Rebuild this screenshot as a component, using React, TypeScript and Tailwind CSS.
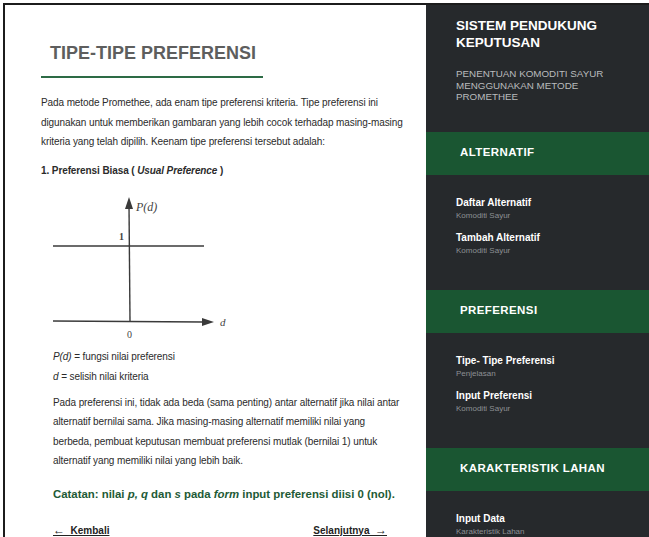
import React from "react";

const font = { fontFamily: '"Liberation Sans", Arial, sans-serif' };

const menu: { title: string; items: { label: string; sub: string }[] }[] = [
  {
    title: "ALTERNATIF",
    items: [
      { label: "Daftar Alternatif", sub: "Komoditi Sayur" },
      { label: "Tambah Alternatif", sub: "Komoditi Sayur" },
    ],
  },
  {
    title: "PREFERENSI",
    items: [
      { label: "Tipe- Tipe Preferensi", sub: "Penjelasan" },
      { label: "Input Preferensi", sub: "Komoditi Sayur" },
    ],
  },
  {
    title: "KARAKTERISTIK LAHAN",
    items: [{ label: "Input Data", sub: "Karakteristik Lahan" }],
  },
];

// Grafik fungsi preferensi biasa (usual criterion)
function UsualChart() {
  return (
    <svg width="180" height="150" viewBox="0 0 180 150" className="block">
      <g stroke="#3a3a3a" strokeWidth="1.4" fill="none">
        <line x1="76" y1="10" x2="77" y2="126" />
        <line x1="0" y1="51" x2="151" y2="51" />
        <line x1="0" y1="126" x2="150" y2="127" />
      </g>
      <polygon points="76,2 72,14 80,14" fill="#3a3a3a" />
      <polygon points="161,127 149,123 149,131" fill="#3a3a3a" />
      <text x="83" y="16" fontFamily='"Liberation Serif", serif' fontStyle="italic" fontSize="12" fill="#444">
        P(d)
      </text>
      <text x="66" y="45" fontFamily='"Liberation Serif", serif' fontWeight="bold" fontSize="10" fill="#444">1</text>
      <text x="74" y="143" fontFamily='"Liberation Serif", serif' fontSize="10" fill="#444">0</text>
      <text x="167" y="131" fontFamily='"Liberation Serif", serif' fontStyle="italic" fontSize="11" fill="#444">d</text>
    </svg>
  );
}

export default function App() {
  return (
    <div className="h-[537px] w-[649px] overflow-hidden bg-white pl-[3px] pt-[3px]" style={font}>
      <div className="flex h-full border-l-2 border-t-2 border-[#1c1c1c] shadow-[inset_1px_1px_0_#9a9a9a]">
        {/* Konten utama */}
        <main className="w-[421px] shrink-0 bg-white pl-[36px] pr-[6px] text-[#2b2b2b]">
          <div className="mt-[37px] w-[222px] border-b-2 border-[#2d6b45] pb-[11px] pl-[9px]">
            <h1 className="text-[18px] font-bold leading-[23px] text-[#5e5e5e]">TIPE-TIPE PREFERENSI</h1>
          </div>
          <p className="mt-[15px] w-[372px] text-[10px] leading-[19.5px] tracking-[-0.1px]">
            Pada metode Promethee, ada enam tipe preferensi kriteria. Tipe preferensi ini digunakan untuk memberikan
            gambaran yang lebih cocok terhadap masing-masing kriteria yang telah dipilih. Keenam tipe preferensi
            tersebut adalah:
          </p>
          <p className="mt-[12px] text-[10px] font-bold leading-[14px] tracking-[-0.1px]">
            1. Preferensi Biasa ( <i>Usual Preference</i> )
          </p>
          <div className="pl-[12px]">
            <div className="mt-[17px]">
              <UsualChart />
            </div>
            <p className="mt-[2px] text-[10px] leading-[20px] tracking-[-0.1px]">
              <i>P(d)</i> = fungsi nilai preferensi
            </p>
            <p className="text-[10px] leading-[20px] tracking-[-0.1px]">
              <i>d</i> = selisih nilai kriteria
            </p>
            <p className="mt-[6px] w-[352px] text-[10px] leading-[19.5px] tracking-[-0.1px]">
              Pada preferensi ini, tidak ada beda (sama penting) antar alternatif jika nilai antar alternatif bernilai
              sama. Jika masing-masing alternatif memiliki nilai yang berbeda, pembuat keputusan membuat preferensi
              mutlak (bernilai 1) untuk alternatif yang memiliki nilai yang lebih baik.
            </p>
            <p className="mt-[15px] whitespace-nowrap text-[11.4px] font-bold leading-[16px] text-[#1e5a36]">
              Catatan: nilai <i>p, q</i> dan <i>s</i> pada <i>form</i> input preferensi diisi 0 (nol).
            </p>
            <div className="mt-[21px] flex w-[334px] justify-between text-[10px] font-bold leading-[14px] text-[#222]">
              <a className="underline">
                <span className="text-[12px] font-normal">←</span>&nbsp;&nbsp;Kembali
              </a>
              <a className="underline">
                Selanjutnya&nbsp;&nbsp;<span className="text-[12px] font-normal">→</span>
              </a>
            </div>
          </div>
        </main>

        {/* Menu samping */}
        <aside className="flex-1 bg-[#26292c] text-white">
          <div className="px-[30px] pt-[12px]">
            <h2 className="text-[13.5px] font-bold leading-[17px]">
              SISTEM PENDUKUNG
              <br />
              KEPUTUSAN
            </h2>
            <p className="mt-[17px] text-[9.8px] leading-[11.5px] text-[#b9bbbd]">
              PENENTUAN KOMODITI SAYUR
              <br />
              MENGGUNAKAN METODE
              <br />
              PROMETHEE
            </p>
          </div>
          <div className="mt-[29px]">
            {menu.map((sec) => (
              <div key={sec.title} className="mb-[33px]">
                <div className="flex h-[43px] items-center bg-[#1a5632] px-[34px] text-[11.5px] font-bold tracking-[0.4px]">
                  {sec.title}
                </div>
                <ul className="px-[30px] pt-[21px]">
                  {sec.items.map((it) => (
                    <li key={it.label} className="mb-[9px]">
                      <div className="text-[10px] font-bold leading-[13px]">{it.label}</div>
                      <div className="text-[8px] leading-[13px] text-[#8d9094]">{it.sub}</div>
                    </li>
                  ))}
                </ul>
              </div>
            ))}
          </div>
        </aside>
      </div>
    </div>
  );
}
